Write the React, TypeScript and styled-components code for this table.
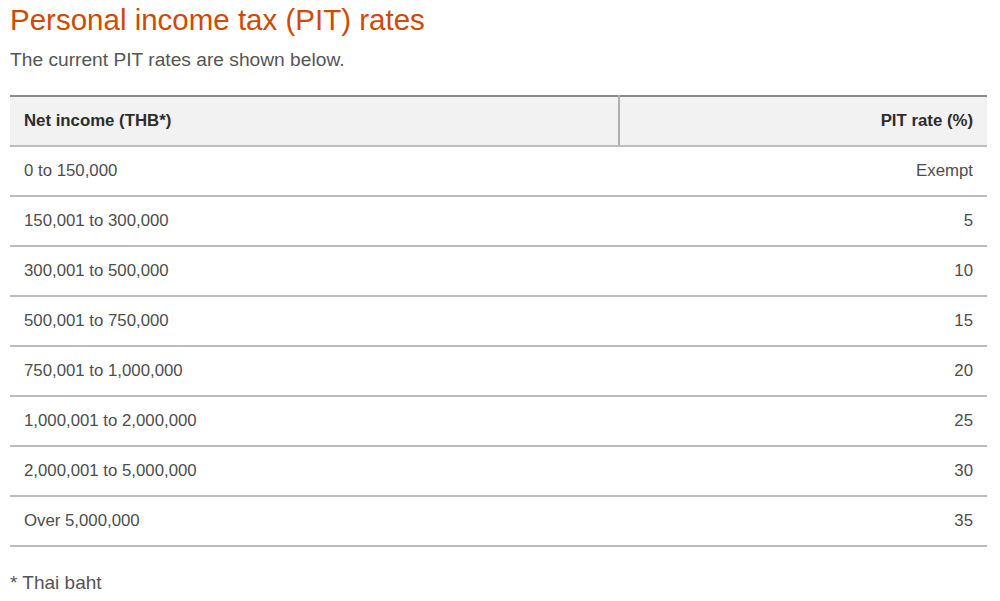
import React from "react";
import styled, { createGlobalStyle } from "styled-components";

const Global = createGlobalStyle`
  html, body { margin: 0; padding: 0; background: #fff; }
  body { font-family: "Liberation Sans", Arial, sans-serif; }
`;

const Page = styled.div`
  padding: 2px 13px 0 10px;
`;

const Title = styled.h2`
  margin: 0;
  font-size: 29.5px;
  line-height: 36px;
  font-weight: 400;
  color: #d04a02;
`;

const Lead = styled.p`
  margin: 11px 0 0;
  font-size: 19.2px;
  line-height: 22px;
  color: #555;
`;

const Table = styled.table`
  width: 100%;
  margin-top: 24px;
  border-collapse: collapse;
  border-top: 2px solid #8a8a8a;
  font-size: 16.8px;
`;

const HeadCell = styled.th<{ $right?: boolean }>`
  background: #f2f2f2;
  height: 48px;
  padding: 0 14px;
  font-weight: 700;
  color: #2d2d2d;
  text-align: ${(p) => (p.$right ? "right" : "left")};
  border-bottom: 2px solid #bdbdbd;
  ${(p) => (p.$right ? "border-left: 2px solid #b0b0b0;" : "width: 580px;")}
`;

const Cell = styled.td<{ $right?: boolean }>`
  height: 48px;
  padding: 0 14px;
  color: #4d4d4d;
  text-align: ${(p) => (p.$right ? "right" : "left")};
  border-bottom: 2px solid #bdbdbd;
`;

const Note = styled.p`
  margin: 25px 0 0;
  font-size: 19px;
  color: #555;
`;

const rows: [string, string][] = [
  ["0 to 150,000", "Exempt"],
  ["150,001 to 300,000", "5"],
  ["300,001 to 500,000", "10"],
  ["500,001 to 750,000", "15"],
  ["750,001 to 1,000,000", "20"],
  ["1,000,001 to 2,000,000", "25"],
  ["2,000,001 to 5,000,000", "30"],
  ["Over 5,000,000", "35"],
];

export default function App() {
  return (
    <Page>
      <Global />
      <Title>Personal income tax (PIT) rates</Title>
      <Lead>The current PIT rates are shown below.</Lead>
      <Table>
        <thead>
          <tr>
            <HeadCell>Net income (THB*)</HeadCell>
            <HeadCell $right>PIT rate (%)</HeadCell>
          </tr>
        </thead>
        <tbody>
          {rows.map(([a, b]) => (
            <tr key={a}>
              <Cell>{a}</Cell>
              <Cell $right>{b}</Cell>
            </tr>
          ))}
        </tbody>
      </Table>
      <Note>* Thai baht</Note>
    </Page>
  );
}
